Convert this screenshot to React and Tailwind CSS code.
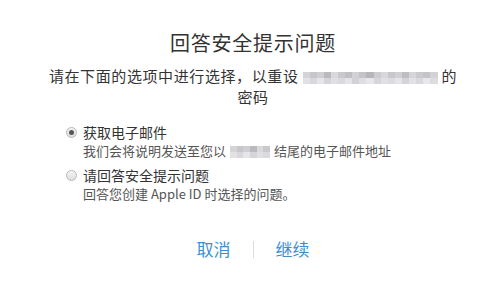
import React from 'react';

const font = { fontFamily: '"Noto Sans CJK SC", "Liberation Sans", sans-serif' };

const blurTop = ['#d4d4d8', '#c6c6cb', '#cfcfd3', '#b9b9be', '#d9d9dc', '#c9c9cd', '#bfbfc4', '#d2d2d6', '#c3c3c8', '#b5b5ba', '#cdcdd1', '#d8d8db', '#c7c7cc', '#d0d0d4', '#bdbdc2', '#d6d6d9', '#cacace', '#c4c4c9', '#d3d3d6'];
const blurBottom = ['#e2e2e5', '#d8d8dc', '#e6e6e8', '#d5d5d9', '#e0e0e3', '#dadade', '#e4e4e6', '#d2d2d6', '#dfdfe2', '#e7e7e9', '#d6d6da', '#e1e1e4', '#dcdce0', '#e5e5e7', '#d4d4d8', '#e3e3e5', '#d9d9dd', '#e8e8ea', '#dddde0'];

function Blur({ cols, width }) {
  return (
    <span className="inline-flex flex-col align-middle" style={{ width }}>
      <span className="flex h-[6px]">
        {blurTop.slice(0, cols).map((c, i) => (
          <span key={i} className="flex-1" style={{ background: c }} />
        ))}
      </span>
      <span className="flex h-[6px]">
        {blurBottom.slice(0, cols).map((c, i) => (
          <span key={i} className="flex-1" style={{ background: c }} />
        ))}
      </span>
    </span>
  );
}

function Radio({ checked }) {
  return (
    <span className="mt-[4px] flex h-[11px] w-[11px] shrink-0 items-center justify-center rounded-full border border-[#b8b8b8] bg-gradient-to-b from-[#f4f4f4] to-[#dedede]">
      {checked && <span className="h-[5px] w-[5px] rounded-full bg-[#555]" />}
    </span>
  );
}

export default function App() {
  return (
    <div className="h-[291px] w-[500px] bg-white pl-[6px] text-[#333]" style={font}>
      <h1 className="pt-[28px] text-center text-[20px] leading-[30px] tracking-[0.75px] text-[#333]">
        回答安全提示问题
      </h1>
      <p className="mt-[7px] px-[38px] text-center text-[15px] leading-[21px] tracking-[0.6px] text-[#333]">
        请在下面的选项中进行选择，以重设<span className="mx-[4px]"><Blur cols={19} width={135} /></span>的
        <br />
        密码
      </p>

      <div className="mt-[16px] flex flex-col gap-[6px] pl-[60px]">
        <label className="flex gap-[6px]">
          <Radio checked />
          <div>
            <div className="text-[14px] leading-[19px] text-[#333]">获取电子邮件</div>
            <div className="text-[13px] leading-[18px] text-[#555]">
              我们会将说明发送至您以<span className="mx-[4px]"><Blur cols={6} width={40} /></span>结尾的电子邮件地址
            </div>
          </div>
        </label>
        <label className="flex gap-[6px]">
          <Radio />
          <div>
            <div className="text-[14px] leading-[19px] text-[#333]">请回答安全提示问题</div>
            <div className="text-[13px] leading-[18px] text-[#555]">
              回答您创建 Apple ID 时选择的问题。
            </div>
          </div>
        </label>
      </div>

      <div className="mt-[35px] flex items-center justify-center">
        <button className="text-[17px] leading-[22px] text-[#3a8fd3]">取消</button>
        <span className="mx-[22px] h-[17px] w-px bg-[#dcdcdc]" />
        <button className="text-[17px] leading-[22px] text-[#3a8fd3]">继续</button>
      </div>
    </div>
  );
}
